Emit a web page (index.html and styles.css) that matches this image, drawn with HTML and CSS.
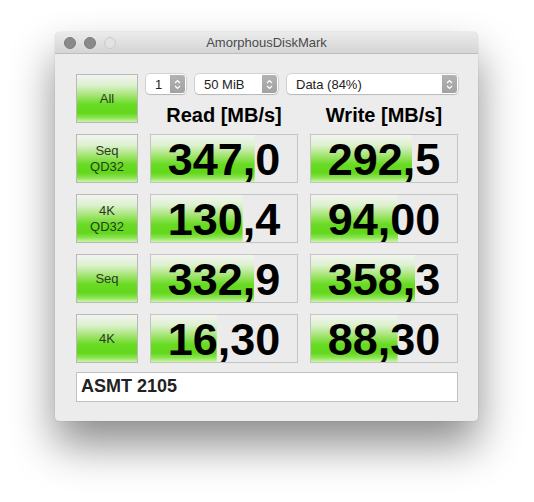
FILE: index.html
```html
<!DOCTYPE html>
<html lang="en">
<head>
    <meta charset="UTF-8">
    <title>AmorphousDiskMark</title>
    <link rel="stylesheet" href="styles.css">
</head>
<body>
    <div class="window">
        <div class="titlebar">
            <div class="lights">
                <span class="light"></span>
                <span class="light"></span>
                <span class="light off"></span>
            </div>
            <div class="title">AmorphousDiskMark</div>
        </div>

        <div class="content">
            <div class="grid">
                <button class="test-btn">All</button>
                <div class="head">
                    <div class="controls">
                        <div class="popup popup-count"><span>1</span><i class="stepper"><svg width="7" height="11" viewBox="0 0 7 11"><path d="M1 4 3.5 1.5 6 4M1 7 3.5 9.5 6 7" fill="none" stroke="#fff" stroke-width="1.2"/></svg></i></div>
                        <div class="popup popup-size"><span>50 MiB</span><i class="stepper"><svg width="7" height="11" viewBox="0 0 7 11"><path d="M1 4 3.5 1.5 6 4M1 7 3.5 9.5 6 7" fill="none" stroke="#fff" stroke-width="1.2"/></svg></i></div>
                        <div class="popup popup-data"><span>Data (84%)</span><i class="stepper"><svg width="7" height="11" viewBox="0 0 7 11"><path d="M1 4 3.5 1.5 6 4M1 7 3.5 9.5 6 7" fill="none" stroke="#fff" stroke-width="1.2"/></svg></i></div>
                    </div>
                    <div class="labels">
                        <div>Read [MB/s]</div>
                        <div>Write [MB/s]</div>
                    </div>
                </div>

                <button class="test-btn">Seq<br>QD32</button>
                <div class="cell" style="--p: 71%">347,0</div>
                <div class="cell" style="--p: 69.5%">292,5</div>

                <button class="test-btn">4K<br>QD32</button>
                <div class="cell" style="--p: 62.7%">130,4</div>
                <div class="cell" style="--p: 59.9%">94,00</div>

                <button class="test-btn">Seq</button>
                <div class="cell" style="--p: 70.6%">332,9</div>
                <div class="cell" style="--p: 71.3%">358,3</div>

                <button class="test-btn">4K</button>
                <div class="cell" style="--p: 45%">16,30</div>
                <div class="cell" style="--p: 59.3%">88,30</div>
            </div>

            <div class="name">ASMT 2105</div>
        </div>
    </div>
</body>
</html>
```

FILE: styles.css
```css
:root {
    --window-bg: #ececec;
    --border: #c4c4c4;
    --text: #1e1e1e;
    --green: linear-gradient(to bottom, #f3f4f2 0%, #dcf1ce 22%, #a0e46c 45%, #6adb25 62%, #62d71b 80%, #86e34c 90%, #cdf6a8 100%);
}

* {
    margin: 0;
    padding: 0;
    box-sizing: border-box;
}

html {
    background: #ffffff;
}

body {
    min-height: 502px;
    font-family: "Liberation Sans", Arial, sans-serif;
    color: var(--text);
    padding: 32px 0 0 55px;
}

.window {
    width: 423px;
    height: 389px;
    background: var(--window-bg);
    border-radius: 5px 5px 4px 4px;
    box-shadow: 0 24px 44px rgba(0, 0, 0, 0.45), 0 0 1px rgba(0, 0, 0, 0.35);
    overflow: hidden;
}

.titlebar {
    height: 22px;
    display: flex;
    align-items: center;
    position: relative;
    background: linear-gradient(to bottom, #ebebeb, #d5d5d5);
    border-bottom: 1px solid #bdbdbd;
}

.lights {
    display: flex;
    gap: 8px;
    padding-left: 9px;
    position: relative;
    z-index: 1;
}

.light {
    width: 12px;
    height: 12px;
    border-radius: 50%;
    background: #8a8a8c;
    border: 1px solid #7b7b7d;
}

.light.off {
    background: #e2e2e2;
    border-color: #c9c9c9;
}

.title {
    position: absolute;
    left: 0;
    right: 0;
    text-align: center;
    font-size: 13px;
    color: #4a4a4a;
}

.content {
    padding: 20px 20px 0 21px;
}

.grid {
    display: grid;
    grid-template-columns: 62px 148px 148px;
    grid-auto-rows: 49px;
    column-gap: 12px;
    row-gap: 11px;
}

.test-btn {
    border: 1px solid #b9b9b9;
    background: var(--green);
    font-family: "Liberation Sans", Arial, sans-serif;
    font-size: 13px;
    line-height: 16px;
    color: #2a3a22;
    cursor: pointer;
}

.head {
    grid-column: 2 / 4;
}

.controls {
    display: flex;
    margin-left: -4px;
    gap: 9px;
    height: 20px;
}

.popup {
    display: flex;
    align-items: center;
    justify-content: space-between;
    background: #ffffff;
    border-radius: 4px;
    box-shadow: 0 0 0 0.5px rgba(0, 0, 0, 0.22), 0 1px 1px rgba(0, 0, 0, 0.12);
    font-size: 13px;
    color: #222;
    padding-left: 9px;
}

.popup-count { width: 40px; }
.popup-size { width: 83px; }
.popup-data { width: 171px; }

.stepper {
    width: 15px;
    height: 18px;
    margin-right: 1px;
    border-radius: 0 3px 3px 0;
    background: linear-gradient(to bottom, #b2b2b2, #a2a2a2);
    display: flex;
    align-items: center;
    justify-content: center;
}

.labels {
    display: grid;
    grid-template-columns: 148px 148px;
    column-gap: 12px;
    margin-top: 10px;
    font-size: 20px;
    font-weight: bold;
    text-align: center;
    color: #000;
}

.cell {
    border: 1px solid var(--border);
    background: var(--green) no-repeat, #ebebeb;
    background-size: var(--p) 100%, auto;
    font-size: 45px;
    font-weight: bold;
    line-height: 47px;
    padding-top: 1px;
    text-align: center;
    color: #000;
}

.name {
    margin-top: 9px;
    height: 30px;
    background: #ffffff;
    border: 1px solid #c0c0c0;
    padding-left: 4px;
    font-size: 18px;
    font-weight: bold;
    line-height: 27px;
    color: #222;
}
```
